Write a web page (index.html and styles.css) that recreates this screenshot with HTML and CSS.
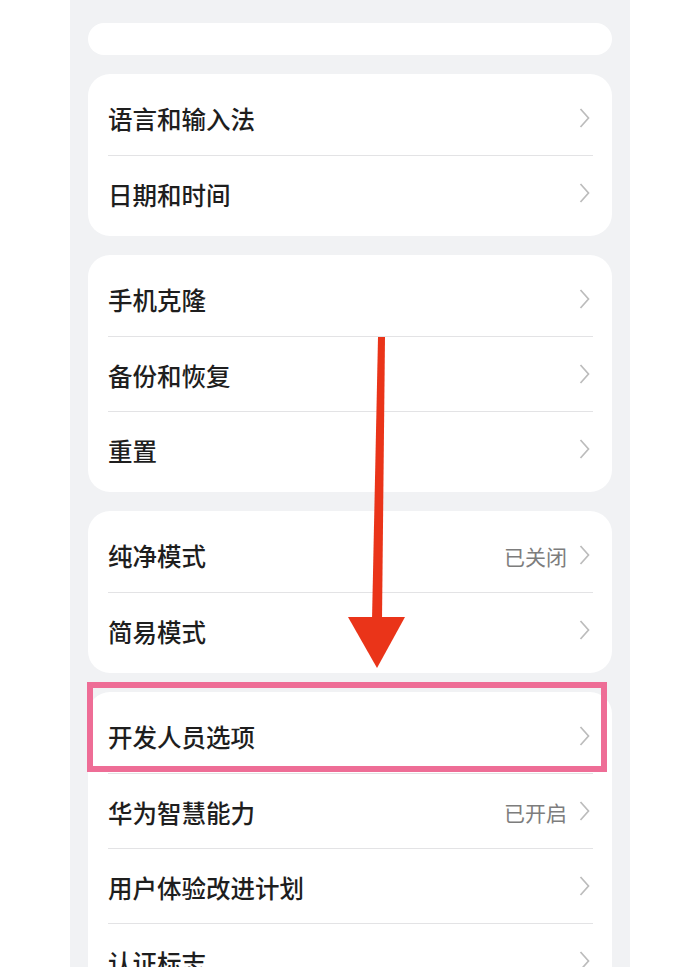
FILE: index.html
```html
<!DOCTYPE html>
<html lang="zh-CN">
<head>
    <meta charset="UTF-8">
    <meta name="viewport" content="width=device-width, initial-scale=1.0">
    <title>系统和更新</title>
    <link rel="stylesheet" href="styles.css">
</head>
<body>
<div class="screen">
    <div class="ghost"></div>
    <div class="card card-top"></div>

    <div class="card">
        <div class="row"><span class="label">语言和输入法</span><svg class="chev" viewBox="0 0 10 20"><polyline points="1,1 9,10 1,19"/></svg></div>
        <div class="row"><span class="label">日期和时间</span><svg class="chev" viewBox="0 0 10 20"><polyline points="1,1 9,10 1,19"/></svg></div>
    </div>

    <div class="card">
        <div class="row"><span class="label">手机克隆</span><svg class="chev" viewBox="0 0 10 20"><polyline points="1,1 9,10 1,19"/></svg></div>
        <div class="row"><span class="label">备份和恢复</span><svg class="chev" viewBox="0 0 10 20"><polyline points="1,1 9,10 1,19"/></svg></div>
        <div class="row"><span class="label">重置</span><svg class="chev" viewBox="0 0 10 20"><polyline points="1,1 9,10 1,19"/></svg></div>
    </div>

    <div class="card">
        <div class="row"><span class="label">纯净模式</span><span class="value">已关闭</span><svg class="chev" viewBox="0 0 10 20"><polyline points="1,1 9,10 1,19"/></svg></div>
        <div class="row"><span class="label">简易模式</span><svg class="chev" viewBox="0 0 10 20"><polyline points="1,1 9,10 1,19"/></svg></div>
    </div>

    <div class="card card-last">
        <div class="highlight"></div>
        <div class="row"><span class="label">开发人员选项</span><svg class="chev" viewBox="0 0 10 20"><polyline points="1,1 9,10 1,19"/></svg></div>
        <div class="row"><span class="label">华为智慧能力</span><span class="value">已开启</span><svg class="chev" viewBox="0 0 10 20"><polyline points="1,1 9,10 1,19"/></svg></div>
        <div class="row"><span class="label">用户体验改进计划</span><svg class="chev" viewBox="0 0 10 20"><polyline points="1,1 9,10 1,19"/></svg></div>
        <div class="row"><span class="label">认证标志</span><svg class="chev" viewBox="0 0 10 20"><polyline points="1,1 9,10 1,19"/></svg></div>
    </div>

    <!-- flèche rouge ajoutée sur la capture -->
    <svg class="arrow" width="700" height="967" viewBox="0 0 700 967">
        <polygon points="378,337 385,337 382,620 372,620" fill="#ea3419"/>
        <polygon points="348,617 405,617 377,668" fill="#ea3419"/>
    </svg>
</div>
</body>
</html>
```

FILE: styles.css
```css
body {
    margin: 0;
    padding: 0;
    background-color: #ffffff;
    font-family: "Noto Sans CJK SC", "Noto Sans", sans-serif;
    height: 967px;
    overflow: hidden;
}
.screen {
    width: 524px;
    margin: 0 auto;
    padding: 0 18px;
    background-color: #f1f2f4;
    height: 967px;
    display: flex;
    flex-direction: column;
    gap: 19px;
}
.ghost {
    height: 23px;
    margin-bottom: -19px;
    flex-shrink: 0;
}
.card {
    background-color: #ffffff;
    border-radius: 22px;
    padding: 6px 0;
    flex-shrink: 0;
}
.card-top {
    height: 32px;
    padding: 0;
    border-radius: 16px;
}
.card-last {
    position: relative;
}
.row {
    height: 75px;
    margin: 0 19px 0 20px;
    display: flex;
    align-items: center;
    border-top: 1px solid #e3e3e5;
    box-sizing: border-box;
}
.row:first-of-type,
.highlight + .row {
    border-top: none;
}
.label {
    flex: 1;
    font-size: 24.5px;
    font-weight: 500;
    color: #1e1e1e;
    padding-top: 2px;
}
.value {
    font-size: 21px;
    color: #7d7d7d;
    margin-right: 12px;
    padding-top: 2px;
}
.chev {
    width: 11px;
    height: 20px;
    margin-right: 3px;
    fill: none;
    stroke: #bcbcbc;
    stroke-width: 1.7;
}
.highlight {
    position: absolute;
    left: -1px;
    top: -10px;
    width: 508px;
    height: 78px;
    border: 6px solid #ee6d96;
    z-index: 2;
}
.arrow {
    position: absolute;
    left: 0;
    top: 0;
    z-index: 3;
}
```
